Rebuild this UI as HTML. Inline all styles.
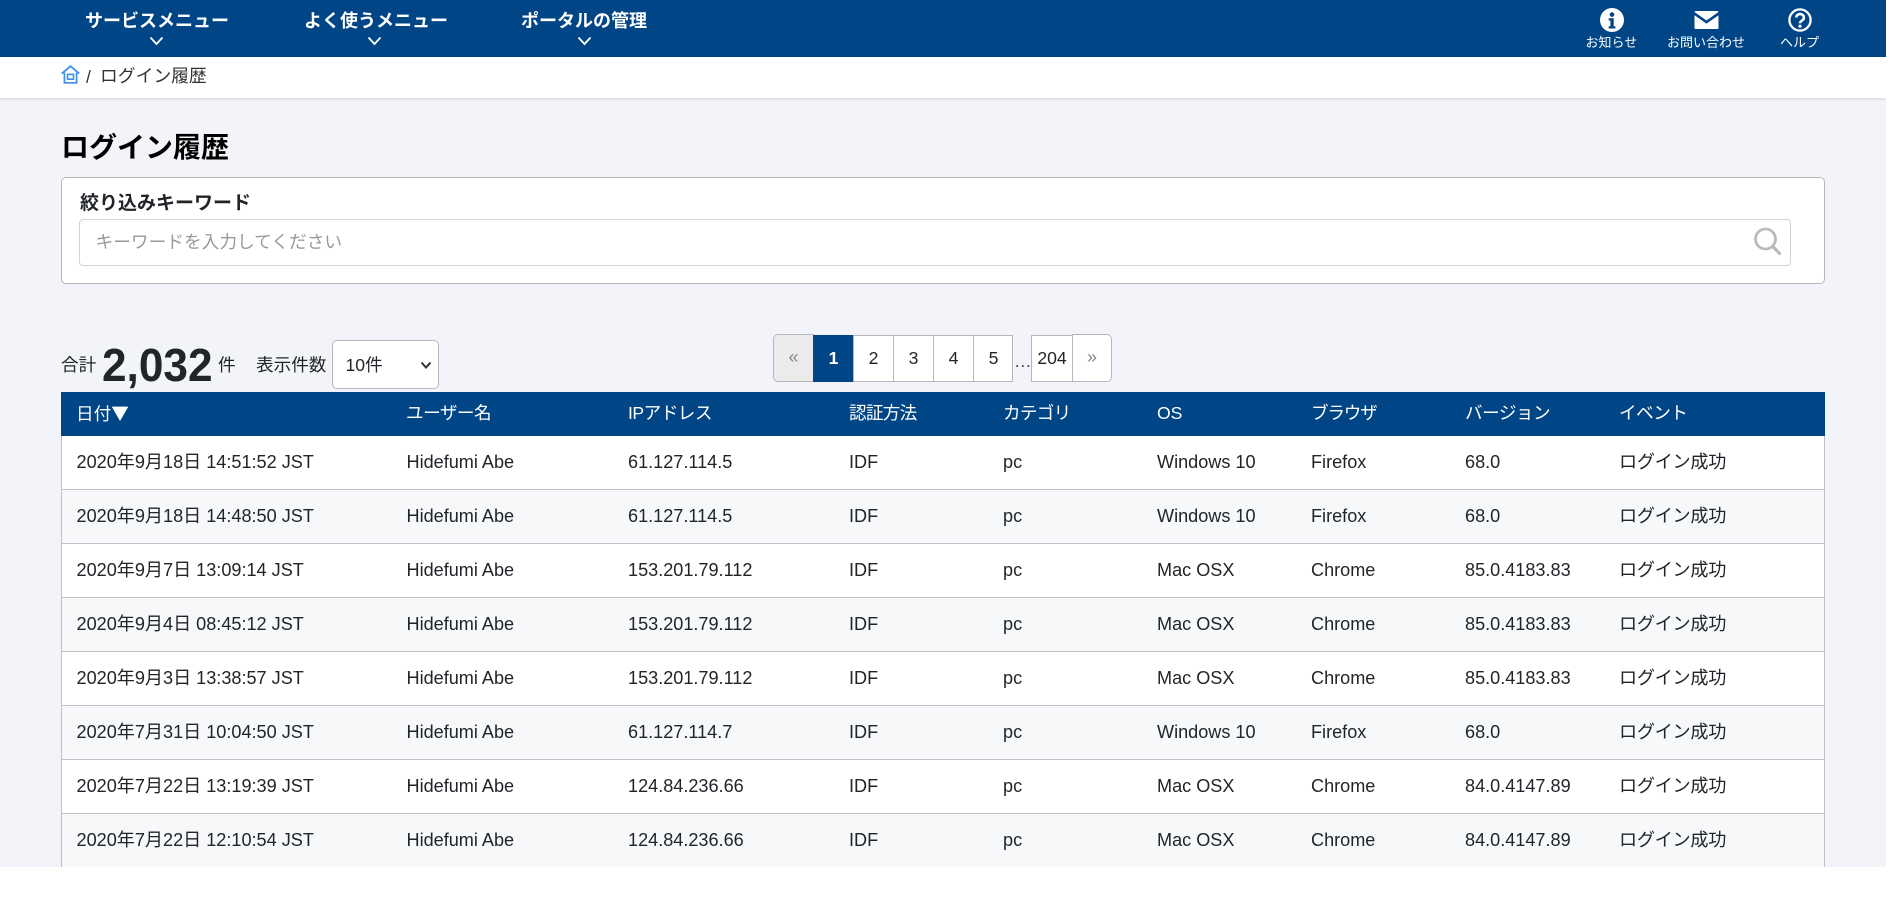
<!DOCTYPE html>
<html lang="ja">
<head>
<meta charset="utf-8">
<title>ログイン履歴</title>
<style>
html,body{margin:0;padding:0;background:#fff;}
body{width:1901px;height:898px;overflow:hidden;position:relative;font-family:"Liberation Sans","Noto Sans CJK JP",sans-serif;color:#212529;font-size:17.6px;}
#page{position:absolute;left:0;top:0;width:1886px;height:867px;background:#f3f4f9;overflow:hidden;}
.t{position:absolute;white-space:nowrap;line-height:24px;}
nav{position:absolute;left:0;top:0;width:1886px;height:57px;background:#004586;}
nav .m{color:#fff;font-weight:bold;font-size:18px;top:9px;letter-spacing:0;}
nav .s{color:#fff;font-size:13px;top:31px;}
nav svg,#crumb svg{position:absolute;}
#crumb{position:absolute;left:0;top:57px;width:1886px;height:41px;background:#fff;box-shadow:0 1px 3px rgba(0,0,0,.15);}
#title{left:61px;top:130.5px;font-size:28px;font-weight:bold;color:#000;line-height:34px;}
#card{position:absolute;left:61px;top:177px;width:1764px;height:107px;box-sizing:border-box;background:#fff;border:1px solid #b5b7bb;border-radius:5px;}
#label{left:80px;top:192px;font-size:19px;font-weight:bold;}
#input{position:absolute;left:79px;top:219px;width:1712px;height:47px;box-sizing:border-box;border:1px solid #ced4da;border-radius:4px;background:#fff;}
#ph{left:95.5px;top:230px;color:#999;font-size:17.7px;}
#sel{position:absolute;left:331.5px;top:340px;width:107.5px;height:49px;box-sizing:border-box;border:1px solid #b5b7bb;border-radius:5px;background:#fff;font:17.6px "Liberation Sans","Noto Sans CJK JP",sans-serif;color:#212529;padding-left:13px;appearance:none;-webkit-appearance:none;}
.pg{position:absolute;top:335px;height:47px;box-sizing:border-box;border:1px solid #b5b7bb;background:#fff;text-align:center;line-height:45px;font-size:17.6px;}
#tbl{position:absolute;left:61px;top:392px;width:1764px;height:475px;overflow:hidden;}
.hd{position:absolute;left:0;top:0;width:1764px;height:44px;background:#004586;color:#fff;}
.hd span,.r span{position:absolute;white-space:nowrap;line-height:24px;}
.hd span{top:9px;letter-spacing:-.5px;}
.hd b{font:17.6px "Noto Sans CJK JP",sans-serif;}
.r{position:absolute;left:0;width:1764px;height:54px;box-sizing:border-box;border-left:1px solid #bfc1c6;border-right:1px solid #bfc1c6;border-bottom:1px solid #bfc1c6;background:#fff;font-size:18.1px;}
.r.e{background:#f7f8fa;}
.r span{top:14px;}
.r .c9{letter-spacing:-.25px;}
.c1{left:15px}.c2{left:345px}.c3{left:567px}.c4{left:788px}.c5{left:942px}.c6{left:1096px}.c7{left:1250px}.c8{left:1404px}.c9{left:1558px}
.r .c1{left:14.5px}.r .c2{left:344.5px}.r .c3{left:566px}.r .c4{left:787px}.r .c5{left:941px}.r .c6{left:1095px}.r .c7{left:1249px}.r .c8{left:1403px}.r .c9{left:1557px}
</style>
</head>
<body>
<div id="page">
<nav>
<span class="t m" style="left:85px">サービスメニュー</span>
<span class="t m" style="left:304px">よく使うメニュー</span>
<span class="t m" style="left:521px">ポータルの管理</span>
<svg style="left:149px;top:36px" width="15" height="10" viewBox="0 0 15 10"><path d="M1.5 1.5L7.5 8L13.5 1.5" fill="none" stroke="#fff" stroke-width="1.8"/></svg>
<svg style="left:367px;top:36px" width="15" height="10" viewBox="0 0 15 10"><path d="M1.5 1.5L7.5 8L13.5 1.5" fill="none" stroke="#fff" stroke-width="1.8"/></svg>
<svg style="left:577px;top:36px" width="15" height="10" viewBox="0 0 15 10"><path d="M1.5 1.5L7.5 8L13.5 1.5" fill="none" stroke="#fff" stroke-width="1.8"/></svg>
<svg style="left:1600px;top:8px" width="24" height="24" viewBox="0 0 24 24"><circle cx="12" cy="12" r="12" fill="#fff"/><circle cx="12" cy="6.6" r="2.3" fill="#004586"/><path d="M8.7 10.3h5v8h1.7v2.2H8.7v-2.2h1.7v-5.8H8.7z" fill="#004586"/></svg>
<svg style="left:1694px;top:10px" width="25" height="20" viewBox="0 0 25 20"><path d="M1.5 1h22a1.3 1.3 0 0 1 1 1L12.5 10.5 .5 2a1.3 1.3 0 0 1 1-1z" fill="#fff"/><path d="M.5 5.2L12.5 13.6 24.5 5.2V17.700a1.300 1.300 0 0 1-1.300 1.300H1.800a1.300 1.300 0 0 1-1.300-1.300z" fill="#fff"/></svg>
<svg style="left:1788px;top:8px" width="24" height="24" viewBox="0 0 24 24"><circle cx="12" cy="12" r="10.600" fill="none" stroke="#fff" stroke-width="2.300"/><path d="M8.300 9.500a3.800 3.500 0 1 1 5.800 3c-1.400.9-2.100 1.400-2.100 2.800" fill="none" stroke="#fff" stroke-width="2.500"/><circle cx="12" cy="18.200" r="1.600" fill="#fff"/></svg>
<span class="t s" style="left:1585.500px">お知らせ</span>
<span class="t s" style="left:1667px">お問い合わせ</span>
<span class="t s" style="left:1780px">ヘルプ</span>
</nav>
<div id="crumb">
<svg style="left:61px;top:8px" width="19" height="19" viewBox="0 0 19 19"><path d="M.8 8.600L9.500 1.200 18.200 8.600" fill="none" stroke="#3d8fe8" stroke-width="1.800"/><path d="M3.400 7.600V17.800h12.200V7.600" fill="none" stroke="#3d8fe8" stroke-width="1.700"/><rect x="6.500" y="9.400" width="6" height="4.800" fill="none" stroke="#3d8fe8" stroke-width="1.600"/></svg>
<span class="t" style="left:86px;top:8px;color:#333">/</span>
<span class="t" style="left:100px;top:7px;color:#333;font-size:17.8px">ログイン履歴</span>
</div>
<span class="t" id="title">ログイン履歴</span>
<div id="card"></div>
<span class="t" id="label">絞り込みキーワード</span>
<div id="input"></div>
<span class="t" id="ph">キーワードを入力してください</span>
<svg style="position:absolute;left:1751px;top:226px" width="32" height="32" viewBox="0 0 32 32"><circle cx="14.500" cy="13" r="10" fill="none" stroke="#bbb" stroke-width="2.800"/><path d="M21.800 20.500L28.500 27.500" stroke="#bbb" stroke-width="3.200" stroke-linecap="round"/></svg>

<span class="t" style="left:61px;top:353px">合計</span>
<span class="t" style="left:101.500px;top:339px;font-size:46px;font-weight:bold;line-height:52px;transform:scaleX(.96);transform-origin:0 50%;">2,032</span>
<span class="t" style="left:218px;top:353px">件</span>
<span class="t" style="left:256px;top:353px">表示件数</span>
<select id="sel"><option>10件</option></select>
<svg style="position:absolute;left:420px;top:361px" width="12" height="9" viewBox="0 0 12 9"><path d="M1.500 1.500L6 6.500 10.500 1.500" fill="none" stroke="#333" stroke-width="2"/></svg>

<div class="pg" style="left:773px;top:334px;width:41px;height:48px;background:#ebebeb;border-radius:5px 0 0 5px;color:#888;font-size:18px;">«</div>
<div class="pg" style="left:813px;width:41px;background:#004586;border-color:#004586;color:#fff;font-weight:bold;">1</div>
<div class="pg" style="left:853px;width:41px;">2</div>
<div class="pg" style="left:893px;width:41px;">3</div>
<div class="pg" style="left:933px;width:41px;">4</div>
<div class="pg" style="left:973px;width:40px;padding-left:1px;">5</div>
<span class="t" style="left:1014px;top:349px;color:#444">…</span>
<div class="pg" style="left:1031px;width:42px;">204</div>
<div class="pg" style="left:1072px;top:334px;width:40px;height:48px;border-radius:0 5px 5px 0;color:#888;font-size:18px;">»</div>

<div id="tbl">
<div class="hd"><span class="c1" style="letter-spacing:0">日付<b>▼</b></span><span class="c2">ユーザー名</span><span class="c3">IPアドレス</span><span class="c4" style="letter-spacing:-.7px">認証方法</span><span class="c5" style="letter-spacing:-.7px">カテゴリ</span><span class="c6" style="letter-spacing:0">OS</span><span class="c7" style="letter-spacing:-1.2px">ブラウザ</span><span class="c8">バージョン</span><span class="c9">イベント</span></div>
<div class="r" style="top:44px"><span class="c1">2020年9月18日 14:51:52 JST</span><span class="c2">Hidefumi Abe</span><span class="c3">61.127.114.5</span><span class="c4">IDF</span><span class="c5">pc</span><span class="c6">Windows 10</span><span class="c7">Firefox</span><span class="c8">68.0</span><span class="c9">ログイン成功</span></div>
<div class="r e" style="top:98px"><span class="c1">2020年9月18日 14:48:50 JST</span><span class="c2">Hidefumi Abe</span><span class="c3">61.127.114.5</span><span class="c4">IDF</span><span class="c5">pc</span><span class="c6">Windows 10</span><span class="c7">Firefox</span><span class="c8">68.0</span><span class="c9">ログイン成功</span></div>
<div class="r" style="top:152px"><span class="c1">2020年9月7日 13:09:14 JST</span><span class="c2">Hidefumi Abe</span><span class="c3">153.201.79.112</span><span class="c4">IDF</span><span class="c5">pc</span><span class="c6">Mac OSX</span><span class="c7">Chrome</span><span class="c8">85.0.4183.83</span><span class="c9">ログイン成功</span></div>
<div class="r e" style="top:206px"><span class="c1">2020年9月4日 08:45:12 JST</span><span class="c2">Hidefumi Abe</span><span class="c3">153.201.79.112</span><span class="c4">IDF</span><span class="c5">pc</span><span class="c6">Mac OSX</span><span class="c7">Chrome</span><span class="c8">85.0.4183.83</span><span class="c9">ログイン成功</span></div>
<div class="r" style="top:260px"><span class="c1">2020年9月3日 13:38:57 JST</span><span class="c2">Hidefumi Abe</span><span class="c3">153.201.79.112</span><span class="c4">IDF</span><span class="c5">pc</span><span class="c6">Mac OSX</span><span class="c7">Chrome</span><span class="c8">85.0.4183.83</span><span class="c9">ログイン成功</span></div>
<div class="r e" style="top:314px"><span class="c1">2020年7月31日 10:04:50 JST</span><span class="c2">Hidefumi Abe</span><span class="c3">61.127.114.7</span><span class="c4">IDF</span><span class="c5">pc</span><span class="c6">Windows 10</span><span class="c7">Firefox</span><span class="c8">68.0</span><span class="c9">ログイン成功</span></div>
<div class="r" style="top:368px"><span class="c1">2020年7月22日 13:19:39 JST</span><span class="c2">Hidefumi Abe</span><span class="c3">124.84.236.66</span><span class="c4">IDF</span><span class="c5">pc</span><span class="c6">Mac OSX</span><span class="c7">Chrome</span><span class="c8">84.0.4147.89</span><span class="c9">ログイン成功</span></div>
<div class="r e" style="top:422px;height:60px"><span class="c1">2020年7月22日 12:10:54 JST</span><span class="c2">Hidefumi Abe</span><span class="c3">124.84.236.66</span><span class="c4">IDF</span><span class="c5">pc</span><span class="c6">Mac OSX</span><span class="c7">Chrome</span><span class="c8">84.0.4147.89</span><span class="c9">ログイン成功</span></div>
</div>
</div>
</body>
</html>
